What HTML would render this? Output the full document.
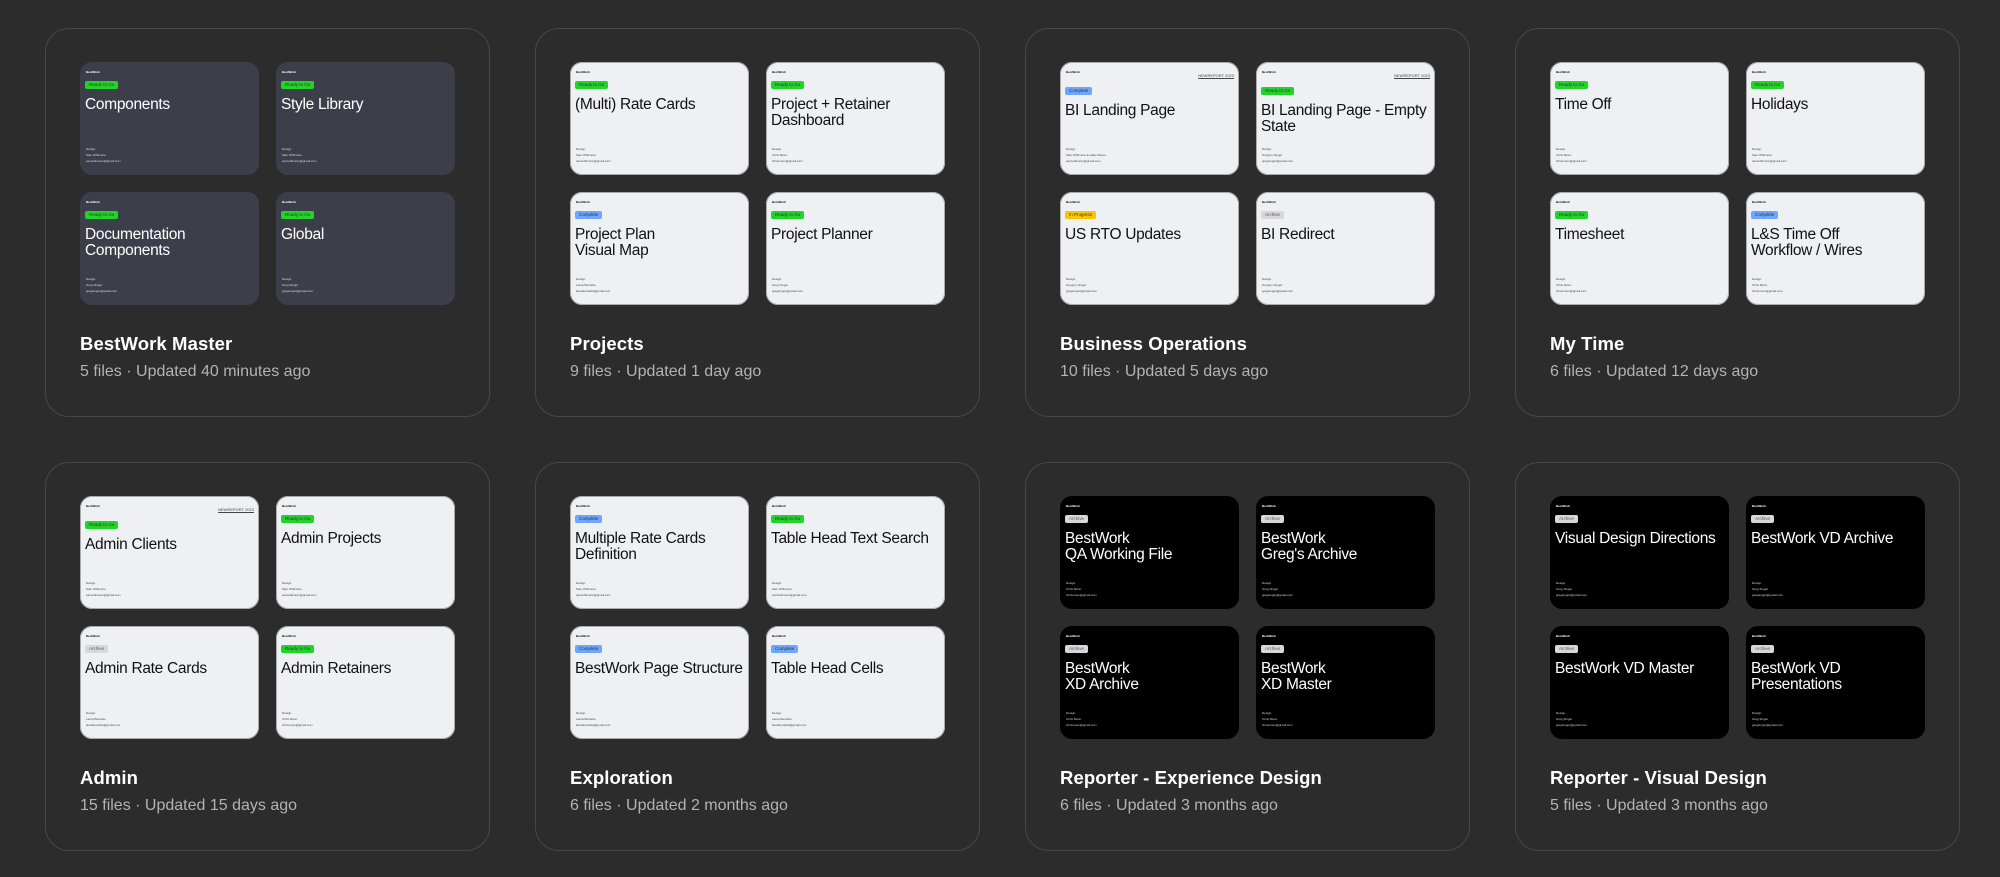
<!DOCTYPE html>
<html><head><meta charset="utf-8"><style>
*{margin:0;padding:0;box-sizing:border-box}
body{width:2000px;height:877px;background:#2c2c2c;font-family:"Liberation Sans",sans-serif;position:relative;overflow:hidden}
.c{position:absolute;width:445px;height:389px;border:1.5px solid #474747;border-radius:24px}
.t{position:absolute;width:179px;height:113px;border-radius:12px;overflow:hidden}
.t1{left:34px;top:33px}.t2{left:230px;top:33px}.t3{left:34px;top:163px}.t4{left:230px;top:163px}
.d{background:#3c3f4a;color:#fff}.l{background:#eff0f4;color:#111;box-shadow:0 0 0 1px #aaa inset}.k{background:#000;color:#fff}
.s{position:absolute;left:6px;top:8px;font-size:3px;font-weight:bold}
.b{position:absolute;left:5px;top:19px;height:8px;line-height:8px;font-size:4.5px;padding:0 4px;border-radius:2px;color:#333;white-space:nowrap}
.g{background:#22d42a}.bl{background:#6ea6ff}.y{background:#f7c600}.a{background:#d8d8dc;color:#555}
.h{position:absolute;left:5px;top:35px;font-size:15.5px;line-height:16px;letter-spacing:-0.3px;width:175px}
.r .b{top:25px}.r .h{top:41px}
.n{position:absolute;right:5px;top:11px;font-size:4px;text-decoration:underline;color:#444}
.m{position:absolute;left:6px;top:84px;font-size:3px;line-height:6px;opacity:.8}
.tt{position:absolute;left:34px;top:304px;color:#fff;font-size:18.5px;font-weight:bold;letter-spacing:.1px}
.st{position:absolute;left:34px;top:334px;color:#b3b3b3;font-size:16px}
</style></head><body>

<div class="c" style="left:45px;top:28px">
<div class="t t1 d"><div class="s">BestWork</div><div class="b g">Ready to Go</div><div class="h">Components</div><div class="m">Design<br>Sam Whitmore<br>samwhitmore@gmail.com</div></div>
<div class="t t2 d"><div class="s">BestWork</div><div class="b g">Ready to Go</div><div class="h">Style Library</div><div class="m">Design<br>Sam Whitmore<br>samwhitmore@gmail.com</div></div>
<div class="t t3 d"><div class="s">BestWork</div><div class="b g">Ready to Go</div><div class="h">Documentation Components</div><div class="m">Design<br>Greg Singer<br>gregsinger@gmail.com</div></div>
<div class="t t4 d"><div class="s">BestWork</div><div class="b g">Ready to Go</div><div class="h">Global</div><div class="m">Design<br>Greg Singer<br>gregsinger@gmail.com</div></div>
<div class="tt">BestWork Master</div><div class="st">5 files · Updated 40 minutes ago</div></div>

<div class="c" style="left:535px;top:28px">
<div class="t t1 l"><div class="s">BestWork</div><div class="b g">Ready to Go</div><div class="h">(Multi) Rate Cards</div><div class="m">Design<br>Sam Whitmore<br>samwhitmore@gmail.com</div></div>
<div class="t t2 l"><div class="s">BestWork</div><div class="b g">Ready to Go</div><div class="h">Project + Retainer Dashboard</div><div class="m">Design<br>Chris Moon<br>chrismoon@gmail.com</div></div>
<div class="t t3 l"><div class="s">BestWork</div><div class="b bl">Complete</div><div class="h">Project Plan<br>Visual Map</div><div class="m">Design<br>Laura Bertoldo<br>laurabertoldo@gmail.com</div></div>
<div class="t t4 l"><div class="s">BestWork</div><div class="b g">Ready to Go</div><div class="h">Project Planner</div><div class="m">Design<br>Greg Singer<br>gregsinger@gmail.com</div></div>
<div class="tt">Projects</div><div class="st">9 files · Updated 1 day ago</div></div>

<div class="c" style="left:1025px;top:28px">
<div class="t t1 l r"><div class="s">BestWork</div><div class="n">NEWREPORT 2023</div><div class="b bl">Complete</div><div class="h">BI Landing Page</div><div class="m">Design<br>Sam Whitmore &amp; Gaby Moore<br>samwhitmore@gmail.com</div></div>
<div class="t t2 l r"><div class="s">BestWork</div><div class="n">NEWREPORT 2023</div><div class="b g">Ready to Go</div><div class="h">BI Landing Page - Empty State</div><div class="m">Design<br>Gregory Singer<br>gregsinger@gmail.com</div></div>
<div class="t t3 l"><div class="s">BestWork</div><div class="b y">In Progress</div><div class="h">US RTO Updates</div><div class="m">Design<br>Gregory Singer<br>gregsinger@gmail.com</div></div>
<div class="t t4 l"><div class="s">BestWork</div><div class="b a">Archive</div><div class="h">BI Redirect</div><div class="m">Design<br>Gregory Singer<br>gregsinger@gmail.com</div></div>
<div class="tt">Business Operations</div><div class="st">10 files · Updated 5 days ago</div></div>

<div class="c" style="left:1515px;top:28px">
<div class="t t1 l"><div class="s">BestWork</div><div class="b g">Ready to Go</div><div class="h">Time Off</div><div class="m">Design<br>Chris Moon<br>chrismoon@gmail.com</div></div>
<div class="t t2 l"><div class="s">BestWork</div><div class="b g">Ready to Go</div><div class="h">Holidays</div><div class="m">Design<br>Sam Whitmore<br>samwhitmore@gmail.com</div></div>
<div class="t t3 l"><div class="s">BestWork</div><div class="b g">Ready to Go</div><div class="h">Timesheet</div><div class="m">Design<br>Chris Moon<br>chrismoon@gmail.com</div></div>
<div class="t t4 l"><div class="s">BestWork</div><div class="b bl">Complete</div><div class="h">L&amp;S Time Off<br>Workflow / Wires</div><div class="m">Design<br>Chris Moon<br>chrismoon@gmail.com</div></div>
<div class="tt">My Time</div><div class="st">6 files · Updated 12 days ago</div></div>

<div class="c" style="left:45px;top:462px">
<div class="t t1 l r"><div class="s">BestWork</div><div class="n">NEWREPORT 2023</div><div class="b g">Ready to Go</div><div class="h">Admin Clients</div><div class="m">Design<br>Sam Whitmore<br>samwhitmore@gmail.com</div></div>
<div class="t t2 l"><div class="s">BestWork</div><div class="b g">Ready to Go</div><div class="h">Admin Projects</div><div class="m">Design<br>Sam Whitmore<br>samwhitmore@gmail.com</div></div>
<div class="t t3 l"><div class="s">BestWork</div><div class="b a">Archive</div><div class="h">Admin Rate Cards</div><div class="m">Design<br>Laura Bertoldo<br>laurabertoldo@gmail.com</div></div>
<div class="t t4 l"><div class="s">BestWork</div><div class="b g">Ready to Go</div><div class="h">Admin Retainers</div><div class="m">Design<br>Chris Moon<br>chrismoon@gmail.com</div></div>
<div class="tt">Admin</div><div class="st">15 files · Updated 15 days ago</div></div>

<div class="c" style="left:535px;top:462px">
<div class="t t1 l"><div class="s">BestWork</div><div class="b bl">Complete</div><div class="h">Multiple Rate Cards Definition</div><div class="m">Design<br>Sam Whitmore<br>samwhitmore@gmail.com</div></div>
<div class="t t2 l"><div class="s">BestWork</div><div class="b g">Ready to Go</div><div class="h">Table Head Text Search</div><div class="m">Design<br>Sam Whitmore<br>samwhitmore@gmail.com</div></div>
<div class="t t3 l"><div class="s">BestWork</div><div class="b bl">Complete</div><div class="h">BestWork Page Structure</div><div class="m">Design<br>Laura Bertoldo<br>laurabertoldo@gmail.com</div></div>
<div class="t t4 l"><div class="s">BestWork</div><div class="b bl">Complete</div><div class="h">Table Head Cells</div><div class="m">Design<br>Laura Bertoldo<br>laurabertoldo@gmail.com</div></div>
<div class="tt">Exploration</div><div class="st">6 files · Updated 2 months ago</div></div>

<div class="c" style="left:1025px;top:462px">
<div class="t t1 k"><div class="s">BestWork</div><div class="b a">Archive</div><div class="h">BestWork<br>QA Working File</div><div class="m">Design<br>Chris Moon<br>chrismoon@gmail.com</div></div>
<div class="t t2 k"><div class="s">BestWork</div><div class="b a">Archive</div><div class="h">BestWork<br>Greg's Archive</div><div class="m">Design<br>Greg Singer<br>gregsinger@gmail.com</div></div>
<div class="t t3 k"><div class="s">BestWork</div><div class="b a">Archive</div><div class="h">BestWork<br>XD Archive</div><div class="m">Design<br>Chris Moon<br>chrismoon@gmail.com</div></div>
<div class="t t4 k"><div class="s">BestWork</div><div class="b a">Archive</div><div class="h">BestWork<br>XD Master</div><div class="m">Design<br>Chris Moon<br>chrismoon@gmail.com</div></div>
<div class="tt">Reporter - Experience Design</div><div class="st">6 files · Updated 3 months ago</div></div>

<div class="c" style="left:1515px;top:462px">
<div class="t t1 k"><div class="s">BestWork</div><div class="b a">Archive</div><div class="h">Visual Design Directions</div><div class="m">Design<br>Greg Singer<br>gregsinger@gmail.com</div></div>
<div class="t t2 k"><div class="s">BestWork</div><div class="b a">Archive</div><div class="h">BestWork VD Archive</div><div class="m">Design<br>Greg Singer<br>gregsinger@gmail.com</div></div>
<div class="t t3 k"><div class="s">BestWork</div><div class="b a">Archive</div><div class="h">BestWork VD Master</div><div class="m">Design<br>Greg Singer<br>gregsinger@gmail.com</div></div>
<div class="t t4 k"><div class="s">BestWork</div><div class="b a">Archive</div><div class="h">BestWork VD<br>Presentations</div><div class="m">Design<br>Greg Singer<br>gregsinger@gmail.com</div></div>
<div class="tt">Reporter - Visual Design</div><div class="st">5 files · Updated 3 months ago</div></div>

</body></html>
